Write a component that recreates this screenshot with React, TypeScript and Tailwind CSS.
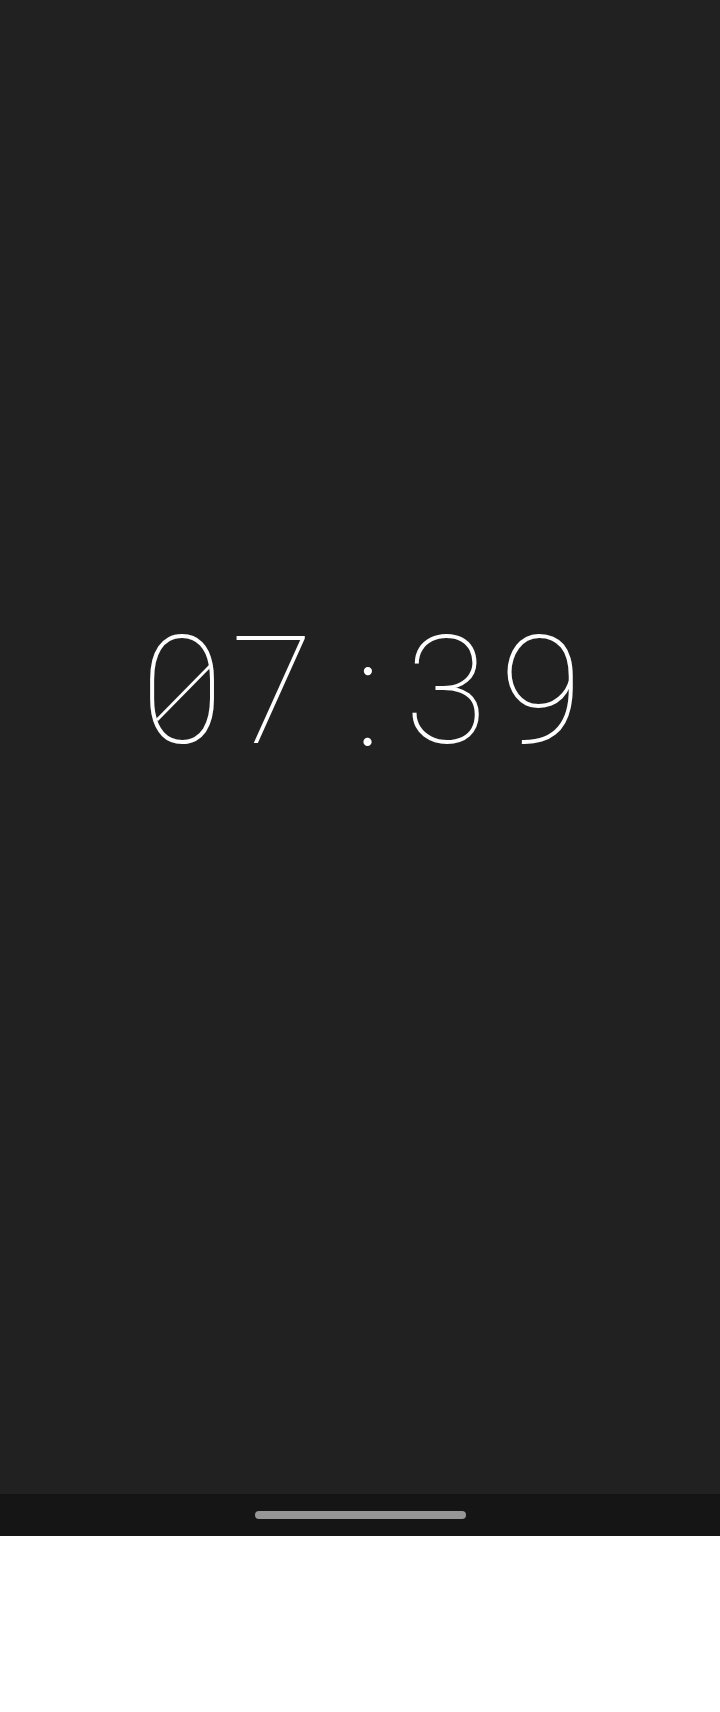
const digits = [
  { ch: '0', cell: 'w-[90px]' },
  { ch: '7', cell: 'w-[90px]' },
  { ch: ':', cell: 'w-[102px] mt-[3px]' },
  { ch: '3', cell: 'w-[54px]' },
  { ch: '9', cell: 'w-[136px]' },
];

const App = () => {
  return (
    <div className="w-[720px] h-[1712px] bg-white flex flex-col">
      <main className="h-[1494px] bg-[#212121] pt-[617px]">
        <div
          className="flex pl-[137px] text-white text-[150px] leading-none font-thin"
          style={{ fontFamily: 'Roboto, "Noto Sans", sans-serif' }}
        >
          {digits.map((d, i) => (
            <span key={i} className={`${d.cell} flex justify-center relative`}>
              {d.ch}
              {d.ch === '0' && (
                <svg className="absolute left-0 top-0" width="90" height="150" viewBox="0 0 90 150">
                  <line x1="74" y1="48" x2="20" y2="103" stroke="white" strokeWidth="3" />
                </svg>
              )}
            </span>
          ))}
        </div>
      </main>
      <div className="h-[42px] bg-[#151515] flex items-center justify-center">
        <div className="w-[211px] h-[8px] rounded-full bg-[#969696]" />
      </div>
    </div>
  );
};

export default App;
